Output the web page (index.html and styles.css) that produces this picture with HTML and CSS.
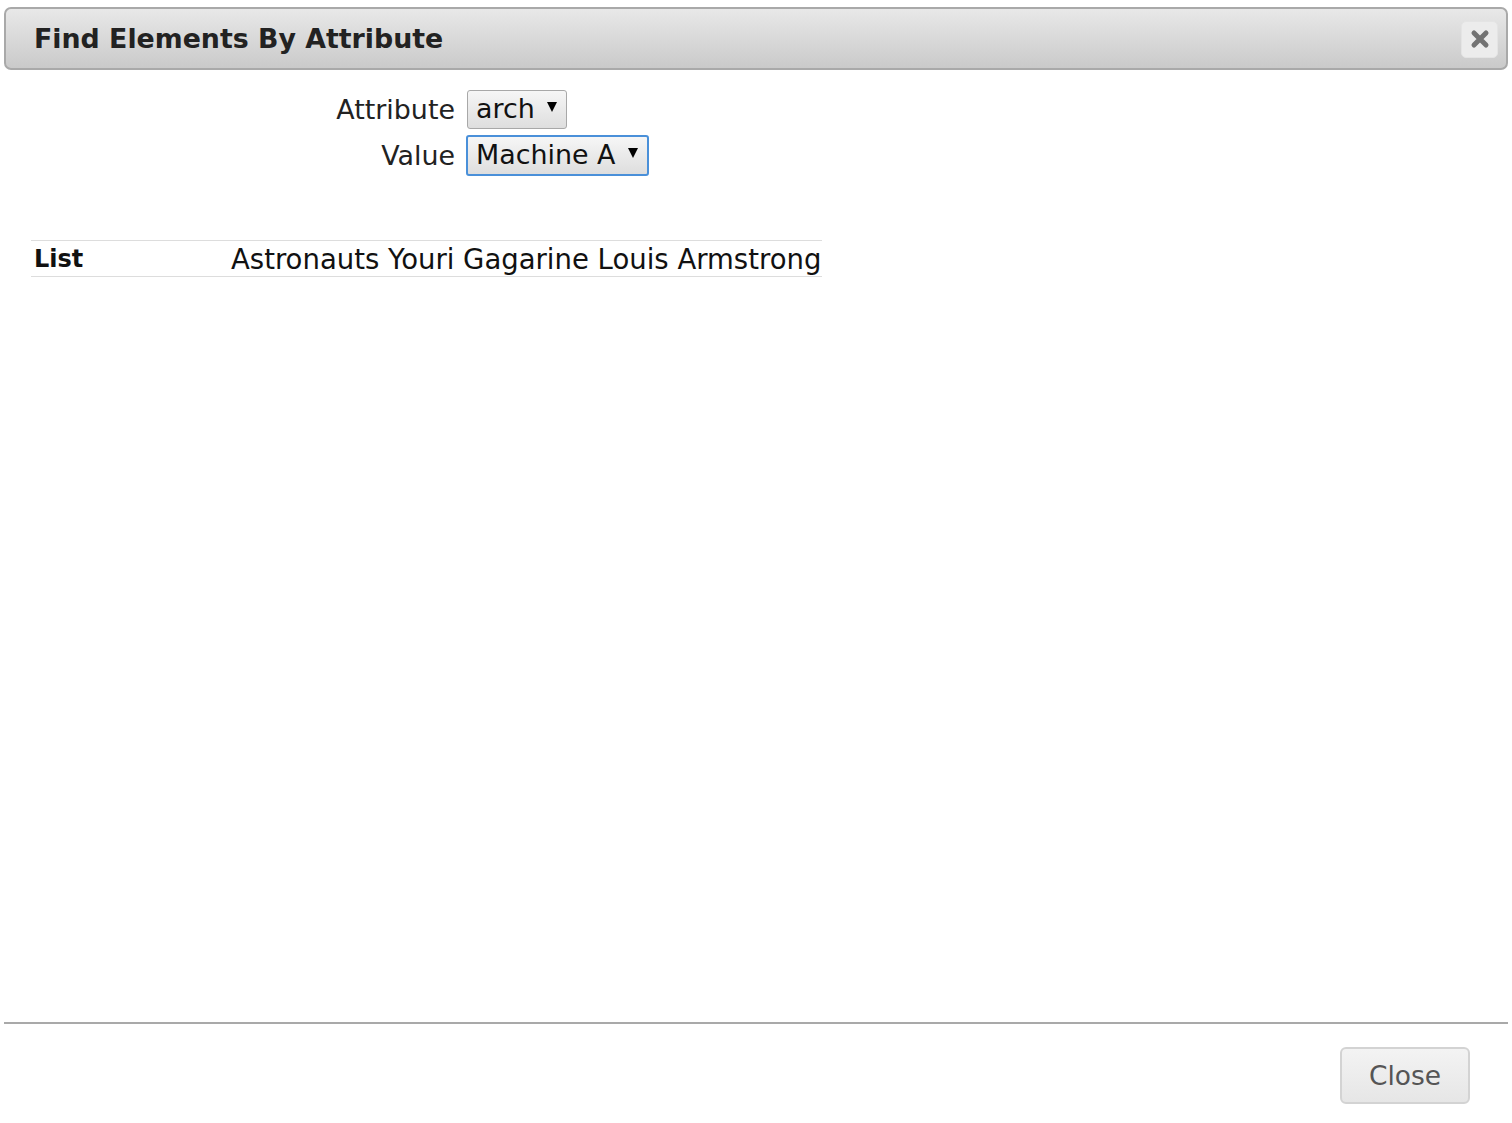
FILE: index.html
```html
<!DOCTYPE html>
<html>
<head>
<meta charset="utf-8">
<link rel="stylesheet" href="styles.css">
</head>
<body>
<div class="dialog">
  <div class="titlebar">
    <span class="title">Find Elements By Attribute</span>
    <button class="x-btn" aria-label="close">
      <svg width="20" height="20" viewBox="0 0 20 20"><path d="M4 4 L16 16 M16 4 L4 16" stroke="#737373" stroke-width="5" stroke-linecap="round"/></svg>
    </button>
  </div>
  <div class="content">
    <div class="form">
      <div class="label">Attribute</div>
      <div class="sel"><span>arch</span><i class="arrow"></i></div>
      <div class="label">Value</div>
      <div class="sel focus"><span>Machine A</span><i class="arrow"></i></div>
    </div>
    <table class="props">
      <tr><th>List</th><td>Astronauts Youri Gagarine Louis Armstrong</td></tr>
    </table>
  </div>
  <div class="footer">
    <button class="close-btn">Close</button>
  </div>
</div>
</body>
</html>
```
FILE: styles.css
```css
html, body { margin: 0; padding: 0; background: #fff; }
body { font-family: "DejaVu Sans", Verdana, sans-serif; color: #222; }
.dialog {
  box-sizing: border-box;
  min-height: 1123px;
  display: flex;
  flex-direction: column;
  padding: 7px 4px 0 4px;
}
.titlebar {
  box-sizing: border-box;
  height: 63px;
  border: 2px solid #a9a9a9;
  border-radius: 7px;
  background: linear-gradient(#e8e8e8, #cacaca);
  display: flex;
  align-items: center;
  justify-content: space-between;
  padding: 0 8px 0 28px;
}
.title { font-weight: bold; font-size: 26.8px; color: #222; }
.x-btn {
  width: 37px; height: 37px;
  border: 1px solid #e4e4e4;
  border-radius: 5px;
  background: #ececec;
  display: flex; align-items: center; justify-content: center;
  padding: 0; margin-top: 1px;
}
.x-btn svg { filter: blur(0.7px); }
.content { flex: 1; padding: 20px 27px 0 27px; }
.form {
  display: grid;
  grid-template-columns: 424px max-content;
  column-gap: 12px;
  row-gap: 6px;
  align-items: center;
}
.label { text-align: right; font-size: 26.9px; color: #222; }
.sel {
  box-sizing: border-box;
  justify-self: start;
  display: inline-flex;
  align-items: center;
  height: 39px;
  border: 1px solid #a8a8a8;
  border-radius: 3px;
  background: linear-gradient(#f6f6f6, #dedede);
  padding: 0 9px 2px 8px;
  font-size: 26.9px;
  color: #111;
}
.sel.focus {
  height: 41px;
  border: 2px solid #4a90d9;
  margin-left: -1px;
}
.arrow {
  display: inline-block;
  margin-left: 12px;
  margin-top: -4px;
  width: 0; height: 0;
  border-left: 5px solid transparent;
  border-right: 5px solid transparent;
  border-top: 10px solid #000;
}
.props {
  margin-top: 64px;
  border-collapse: collapse;
  width: 791px;
  font-size: 26px;
}
.props th, .props td {
  border-top: 1px solid #ddd;
  border-bottom: 1px solid #ddd;
  height: 35px;
  padding: 0;
  vertical-align: middle;
}
.props th { text-align: left; width: 200px; padding-left: 3px; box-sizing: border-box; font-size: 24px; color: #111; }
.props td { color: #111; white-space: nowrap; font-size: 27.5px; }
.footer {
  border-top: 2px solid #a9a9a9;
  display: flex;
  justify-content: flex-end;
  padding: 23px 38px 19px 0;
}
.close-btn {
  box-sizing: border-box;
  width: 130px; height: 57px;
  border: 2px solid #d3d3d3;
  border-radius: 6px;
  background: linear-gradient(#f3f3f3, #e6e6e6);
  font-family: "DejaVu Sans", Verdana, sans-serif;
  font-size: 26.5px;
  color: #555;
  padding: 0;
}
```
